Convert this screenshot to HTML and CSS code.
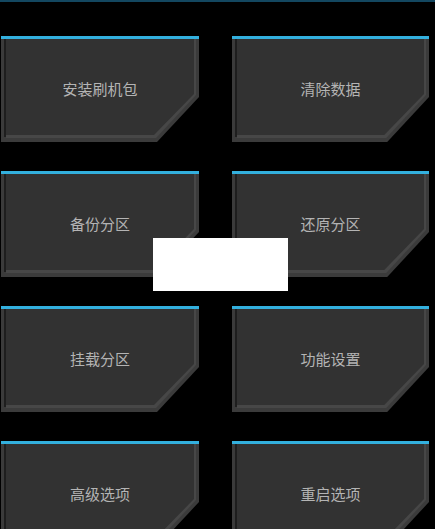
FILE: index.html
```html
<!DOCTYPE html>
<html lang="zh">
<head>
<meta charset="utf-8">
<link rel="stylesheet" href="styles.css">
</head>
<body>
<div class="topline"></div>
<div class="grid">
  <div class="btn">
    <svg class="shape" viewBox="0 0 198 106" preserveAspectRatio="none">
      <polygon points="0,0 198,0 198,61 156,106 0,106" fill="#3b3b3b"/>
      <polygon points="5,3 195,3 195,59 155,102 5,102" fill="#474747"/>
      <polygon points="5,3 193,3 193,58 153,99 5,99" fill="#323232"/>
      <rect x="3" y="3" width="2" height="98" fill="#1e1e1e"/>
      <rect x="0" y="0" width="198" height="3" fill="#33b0de"/>
    </svg>
    <span class="label">安装刷机包</span>
  </div>
  <div class="btn">
    <svg class="shape" viewBox="0 0 198 106" preserveAspectRatio="none">
      <polygon points="0,0 198,0 198,61 156,106 0,106" fill="#3b3b3b"/>
      <polygon points="5,3 195,3 195,59 155,102 5,102" fill="#474747"/>
      <polygon points="5,3 193,3 193,58 153,99 5,99" fill="#323232"/>
      <rect x="3" y="3" width="2" height="98" fill="#1e1e1e"/>
      <rect x="0" y="0" width="198" height="3" fill="#33b0de"/>
    </svg>
    <span class="label">清除数据</span>
  </div>
  <div class="btn">
    <svg class="shape" viewBox="0 0 198 106" preserveAspectRatio="none">
      <polygon points="0,0 198,0 198,61 156,106 0,106" fill="#3b3b3b"/>
      <polygon points="5,3 195,3 195,59 155,102 5,102" fill="#474747"/>
      <polygon points="5,3 193,3 193,58 153,99 5,99" fill="#323232"/>
      <rect x="3" y="3" width="2" height="98" fill="#1e1e1e"/>
      <rect x="0" y="0" width="198" height="3" fill="#33b0de"/>
    </svg>
    <span class="label">备份分区</span>
  </div>
  <div class="btn">
    <svg class="shape" viewBox="0 0 198 106" preserveAspectRatio="none">
      <polygon points="0,0 198,0 198,61 156,106 0,106" fill="#3b3b3b"/>
      <polygon points="5,3 195,3 195,59 155,102 5,102" fill="#474747"/>
      <polygon points="5,3 193,3 193,58 153,99 5,99" fill="#323232"/>
      <rect x="3" y="3" width="2" height="98" fill="#1e1e1e"/>
      <rect x="0" y="0" width="198" height="3" fill="#33b0de"/>
    </svg>
    <span class="label">还原分区</span>
  </div>
  <div class="btn">
    <svg class="shape" viewBox="0 0 198 106" preserveAspectRatio="none">
      <polygon points="0,0 198,0 198,61 156,106 0,106" fill="#3b3b3b"/>
      <polygon points="5,3 195,3 195,59 155,102 5,102" fill="#474747"/>
      <polygon points="5,3 193,3 193,58 153,99 5,99" fill="#323232"/>
      <rect x="3" y="3" width="2" height="98" fill="#1e1e1e"/>
      <rect x="0" y="0" width="198" height="3" fill="#33b0de"/>
    </svg>
    <span class="label">挂载分区</span>
  </div>
  <div class="btn">
    <svg class="shape" viewBox="0 0 198 106" preserveAspectRatio="none">
      <polygon points="0,0 198,0 198,61 156,106 0,106" fill="#3b3b3b"/>
      <polygon points="5,3 195,3 195,59 155,102 5,102" fill="#474747"/>
      <polygon points="5,3 193,3 193,58 153,99 5,99" fill="#323232"/>
      <rect x="3" y="3" width="2" height="98" fill="#1e1e1e"/>
      <rect x="0" y="0" width="198" height="3" fill="#33b0de"/>
    </svg>
    <span class="label">功能设置</span>
  </div>
  <div class="btn">
    <svg class="shape" viewBox="0 0 198 106" preserveAspectRatio="none">
      <polygon points="0,0 198,0 198,61 156,106 0,106" fill="#3b3b3b"/>
      <polygon points="5,3 195,3 195,59 155,102 5,102" fill="#474747"/>
      <polygon points="5,3 193,3 193,58 153,99 5,99" fill="#323232"/>
      <rect x="3" y="3" width="2" height="98" fill="#1e1e1e"/>
      <rect x="0" y="0" width="198" height="3" fill="#33b0de"/>
    </svg>
    <span class="label">高级选项</span>
  </div>
  <div class="btn">
    <svg class="shape" viewBox="0 0 198 106" preserveAspectRatio="none">
      <polygon points="0,0 198,0 198,61 156,106 0,106" fill="#3b3b3b"/>
      <polygon points="5,3 195,3 195,59 155,102 5,102" fill="#474747"/>
      <polygon points="5,3 193,3 193,58 153,99 5,99" fill="#323232"/>
      <rect x="3" y="3" width="2" height="98" fill="#1e1e1e"/>
      <rect x="0" y="0" width="198" height="3" fill="#33b0de"/>
    </svg>
    <span class="label">重启选项</span>
  </div>
</div>
<div class="toast"></div>
</body>
</html>
```
FILE: styles.css
```css
html, body {
  margin: 0;
  padding: 0;
  background: #000;
  width: 435px;
  height: 529px;
  overflow: hidden;
}
body {
  font-family: "Noto Sans CJK SC", "Noto Sans", sans-serif;
  position: relative;
}
.topline {
  height: 2px;
  background: #134760;
}
.grid {
  display: grid;
  grid-template-columns: 198px 197px;
  grid-auto-rows: 106px;
  column-gap: 33px;
  row-gap: 29px;
  padding: 34px 0 0 1px;
}
.btn {
  display: grid;
  align-items: center;
  justify-items: center;
}
.shape {
  grid-area: 1 / 1;
  width: 100%;
  height: 100%;
  display: block;
}
.label {
  grid-area: 1 / 1;
  color: #b4b4b4;
  font-size: 15px;
  line-height: 1;
  margin-bottom: 2px;
}
.toast {
  position: absolute;
  left: 153px;
  top: 238px;
  width: 135px;
  height: 53px;
  background: #fff;
}
```
